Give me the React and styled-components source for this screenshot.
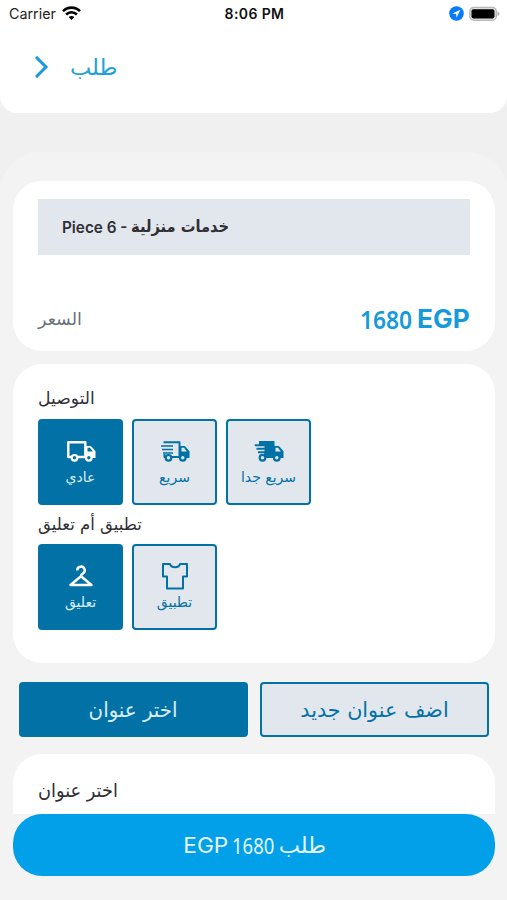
import React from 'react';
import styled, { createGlobalStyle } from 'styled-components';

const Global = createGlobalStyle`
  * { box-sizing: border-box; }
  body { margin: 0; background: #f2f2f2; font-family: Inter, "DejaVu Sans", sans-serif; }
`;
const Screen = styled.div`
  height: 900px; width: 507px; overflow: hidden; position: relative; background: #f0f0f0;
  display: flex; flex-direction: column;
`;
const Header = styled.header`
  height: 113px; flex: none; background: #fff; border-radius: 0 0 17px 17px;
`;
const StatusBar = styled.div`
  height: 27px; display: grid; grid-template-columns: 1fr auto 1fr; align-items: center;
  padding: 0 7px 0 9px; font-size: 14.3px; color: #222;
`;
const Carrier = styled.div`display: flex; align-items: center; gap: 6px;`;
const Clock = styled.div`font-weight: 600; font-size: 14px; color: #111; letter-spacing: 0.4px;`;
const StatusIcons = styled.div`display: flex; align-items: center; justify-content: flex-end; gap: 5px;`;
const TitleRow = styled.div`
  display: flex; align-items: center; height: 79px; padding-left: 34px; gap: 21px;
`;
const Text = styled.span`
  display: block; flex: none; white-space: nowrap; margin: 0;
  width: ${(p) => (p.$width ? `${p.$width}px` : 'auto')};
  font-family: ${(p) => p.$font || '"DejaVu Sans", sans-serif'};
  font-size: ${(p) => p.$size}px; line-height: ${(p) => p.$line || 26}px;
  font-weight: ${(p) => p.$weight || 400}; color: ${(p) => p.$color || '#303034'};
  transform: scaleX(${(p) => p.$stretch || 1});
  transform-origin: ${(p) => p.$origin || 'left'} center;
`;
const Sheet = styled.main`
  margin-top: 39px; flex: 1; background: #f3f3f3; border-radius: 40px 40px 0 0;
  padding: 29px 12px 0 13px;
`;
const Card = styled.section`
  height: ${(p) => p.$height}px; margin-bottom: ${(p) => p.$after || 0}px; background: #fff;
  border-radius: ${(p) => (p.$clipped ? '29px 29px 0 0' : '29px')}; padding: ${(p) => p.$top}px 25px 0;
`;
const ItemBar = styled.div`
  height: 56px; background: #e2e6ed; display: flex; align-items: center; padding-left: 24px;
`;
const PriceRow = styled.div`
  display: flex; align-items: center; justify-content: space-between; margin-top: 49px; height: 30px;
`;
const Price = styled.div`display: flex; align-items: center;`;
const Options = styled.div`display: flex; gap: 9px; height: 86px; margin: ${(p) => p.$margin};`;
const Option = styled.button`
  width: 85px; height: 86px; padding: 14px 0 0; border: 2px solid #0272a6; border-radius: 4px;
  background: ${(p) => (p.$active ? '#0272a6' : '#e2e7ed')};
  color: ${(p) => (p.$active ? '#fff' : '#0272a6')};
  display: flex; flex-direction: column; align-items: center;
`;
const IconBox = styled.div`height: 32px; display: flex; align-items: center;`;
const Actions = styled.div`display: flex; gap: 12px; padding: 0 6px; height: 55px; margin-bottom: 17px;`;
const Action = styled.button`
  flex: 1; height: 55px; padding: 0; border: 2px solid #0272a6; border-radius: 4px;
  display: flex; align-items: center; justify-content: center;
  background: ${(p) => (p.$active ? '#0272a6' : '#e2e7ed')};
`;
const OrderButton = styled.button`
  position: absolute; left: 13px; right: 12px; bottom: 24px; height: 62px; border: 0; padding: 0 4px 1px 0;
  border-radius: 29px; background: #02a0e9; display: flex; align-items: center; justify-content: center;
`;

const Wifi = () => (
  <svg width="19" height="15" viewBox="0 0 19 15" fill="none" stroke="#000" strokeWidth="2.6">
    <path d="M1 5.1C5.7.4 13.3.4 18 5.1" />
    <path d="M4.1 8.5c3-3 7.8-3 10.8 0" />
    <path d="M6.7 11l2.8 3 2.8-3c-1.6-1.5-4-1.5-5.6 0z" fill="#000" stroke="none" />
  </svg>
);
const Location = () => (
  <svg width="15" height="15" viewBox="0 0 15 15">
    <circle cx="7.5" cy="7.5" r="7.3" fill="#087bfc" />
    <path d="M11.4 3.7L3.3 7.5l3.8.4.5 3.8z" fill="#fff" />
  </svg>
);
const Battery = () => (
  <svg width="31" height="16" viewBox="0 0 31 16">
    <rect x=".8" y="1.3" width="26.6" height="13" rx="4" fill="#ddd" stroke="#b9b9b9" strokeWidth="1.3" />
    <rect x="2.5" y="3.2" width="23" height="9.2" rx="1.8" fill="#000" />
    <path d="M28.5 5.5c2.5 1 2.5 3.5 0 4.5z" fill="#aaa" />
  </svg>
);
const Truck = ({ kind }) => {
  const hole = kind === 'normal' ? '#0272a6' : '#e2e7ed';
  return (
    <svg width="30" height="22" viewBox="0 0 30 22" fill="none" stroke="currentColor" strokeWidth="2">
      {kind === 'normal' && <path d="M5 17H2.3V2.2h17V17H11" strokeWidth="2.4" strokeLinejoin="round" />}
      {kind === 'fast' && (
        <>
          <path d="M3.5 2.2h16V17H11M4.5 14v3H6" strokeLinejoin="round" />
          <path d="M1 6h12M2 9.5h11M3 13h10" strokeWidth="1.6" />
        </>
      )}
      {kind === 'express' && (
        <path d="M5 1h15.5v17H5.5v-3.5H10v-1.2H4v-2h6.5V9.8H2.5v-2h8V6.3H.8v-2H5z" fill="currentColor" stroke="none" />
      )}
      <path d="M19.500 6H24q1 0 1.600.8L29.500 11.200V18h-10z" fill="currentColor" stroke="none" />
      <path d="M21.500 7.800H24l2.800 3.700h-5.300z" fill={hole} stroke="none" />
      <circle cx="8.5" cy="17.8" r="2.8" fill={hole} strokeWidth="2.200" />
      <circle cx="22.8" cy="17.8" r="2.8" fill={hole} strokeWidth="2.200" />
    </svg>
  );
};
const Hanger = () => (
  <svg width="26" height="22" viewBox="0 0 26 22" fill="none" stroke="currentColor" strokeWidth="2.5" strokeLinejoin="round">
    <path d="M9.3 5.5a3.700 3.700 0 1 1 5.400 3.100c-1.200.6-1.700 1.200-1.700 2.700L2.500 20h21L13 11.300" />
  </svg>
);
const Shirt = () => (
  <svg width="28" height="28" viewBox="0 0 28 28" fill="none" stroke="currentColor" strokeWidth="2" strokeLinejoin="round">
    <path d="M2 2h7c1 4.300 9 4.300 10 0h7v12.500h-4V26.500H6V14.500H2z" />
  </svg>
);
const blue = '#0272a6';
const pale = '#d9edf5';

export default function App() {
  return (
    <>
      <Global />
      <Screen>
        <Header>
          <StatusBar>
            <Carrier><span>Carrier</span><Wifi /></Carrier>
            <Clock>8:06 PM</Clock>
            <StatusIcons><Location /><Battery /></StatusIcons>
          </StatusBar>
          <TitleRow>
            <svg width="15" height="22" viewBox="0 0 15 22" fill="none" stroke="#189add" strokeWidth="3"><path d="M2 1l10 10L2 21" /></svg>
            <Text as="h1" $size={22.5} $line={28} $color="#20a0dd">طلب</Text>
          </TitleRow>
        </Header>
        <Sheet>
          <Card $height={170} $after={13} $top={18}>
            <ItemBar>
              <Text $size={16} $weight={600} $font="Inter" $stretch={0.955} $width={69}>Piece 6 -</Text>
              <Text $size={16.5} $weight={700} $stretch={0.89}>خدمات منزلية</Text>
            </ItemBar>
            <PriceRow>
              <Text $size={17.5} $color="#69727b">السعر</Text>
              <Price>
                <Text $size={25} $line={24} $weight={600} $font='"Noto Sans"' $color="#159bdc" $stretch={0.91} $width={57}>1680</Text>
                <Text $size={25} $weight={700} $font="Inter" $color="#159bdc" $stretch={1.05} $width={53}>EGP</Text>
              </Price>
            </PriceRow>
          </Card>
          <Card $height={299} $after={19} $top={21}>
            <Text $size={17.2}>التوصيل</Text>
            <Options $margin="8px 0 6px">
              <Option $active><IconBox><Truck kind="normal" /></IconBox><Text $size={14} $color={pale} $line={21}>عادي</Text></Option>
              <Option><IconBox><Truck kind="fast" /></IconBox><Text $size={14} $color={blue} $line={21}>سريع</Text></Option>
              <Option><IconBox><Truck kind="express" /></IconBox><Text $size={14} $color={blue} $line={21}>سريع جدا</Text></Option>
            </Options>
            <Text $size={17} $stretch={0.97}>تطبيق أم تعليق</Text>
            <Options $margin="7px 0 0">
              <Option $active><IconBox><Hanger /></IconBox><Text $size={14} $color={pale} $line={21}>تعليق</Text></Option>
              <Option><IconBox><Shirt /></IconBox><Text $size={14} $color={blue} $line={21}>تطبيق</Text></Option>
            </Options>
          </Card>
          <Actions>
            <Action $active><Text $size={20.5} $color={pale} $stretch={0.965} $origin="center">اختر عنوان</Text></Action>
            <Action><Text $size={20.7} $color={blue} $origin="center">اضف عنوان جديد</Text></Action>
          </Actions>
          <Card $height={60} $top={23} $clipped><Text $size={19} $stretch={0.935}>اختر عنوان</Text></Card>
        </Sheet>
        <OrderButton>
          <Text $size={22} $font="Inter" $color="#e4f6fd" $stretch={1.03} $width={54}>EGP</Text>
          <Text $size={22} $font='"Noto Sans"' $color="#e4f6fd" $stretch={0.84} $width={47}>1680</Text>
          <Text $size={22.5} $color="#e4f6fd">طلب</Text>
        </OrderButton>
      </Screen>
    </>
  );
}
